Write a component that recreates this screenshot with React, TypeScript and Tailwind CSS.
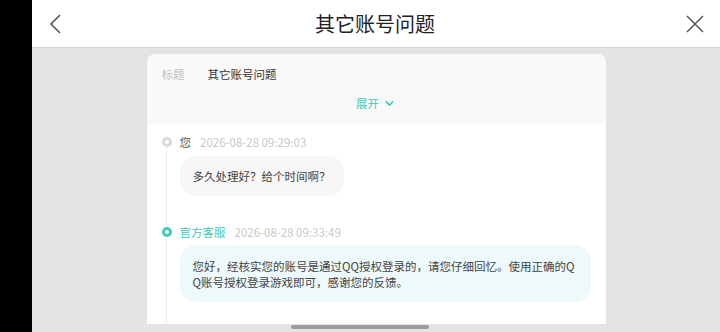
import { ChevronDown } from "lucide-react";

const font = { fontFamily: '"Noto Sans CJK SC", "Noto Sans", sans-serif' };

function Dot({ active }: { active?: boolean }) {
  return (
    <span
      className={`flex h-[10px] w-[10px] shrink-0 items-center justify-center rounded-full ${
        active ? "bg-[#45c9b9]" : "bg-[#d9d9d9]"
      }`}
    >
      <span className="h-[4px] w-[4px] rounded-full bg-white" />
    </span>
  );
}

function Message({
  who,
  time,
  active,
  last,
  children,
}: {
  who: string;
  time: string;
  active?: boolean;
  last?: boolean;
  children: React.ReactNode;
}) {
  return (
    <div className="flex gap-[8px]">
      <div className="flex w-[10px] flex-col items-center pt-[3px]">
        <Dot active={active} />
        <div className="w-px flex-1 bg-[#ededed]" />
      </div>
      <div className={`flex min-w-0 flex-1 flex-col ${last ? "pb-[22px]" : "pb-[28px]"}`}>
        <div className="flex h-[16px] items-center gap-[9px] text-[11.5px] leading-[16px]">
          <span className={active ? "text-[#45c9b9]" : "text-[#555]"}>{who}</span>
          <span className="text-[#c9c9c9]">{time}</span>
        </div>
        {children}
      </div>
    </div>
  );
}

export default function App() {
  return (
    <div className="relative flex h-[332px] w-[720px] overflow-hidden bg-black" style={font}>
      <div className="w-[32px] shrink-0 bg-black" />
      <div className="flex flex-1 flex-col bg-[#e4e4e4]">
        <header className="flex h-[48px] shrink-0 items-center justify-between border-b border-[#d3d3d3] bg-white px-[16px]">
          <svg width="16" height="20" viewBox="0 0 16 20" fill="none">
            <path d="M12 1 L3 10 L12 19" stroke="#555" strokeWidth="1.6" />
          </svg>
          <h1 className="text-[20px] leading-none text-[#222]">其它账号问题</h1>
          <svg width="18" height="18" viewBox="0 0 18 18" fill="none">
            <path d="M1 1 L17 17 M17 1 L1 17" stroke="#555" strokeWidth="1.5" />
          </svg>
        </header>

        <div className="mx-auto mt-[6px] flex h-[270px] w-[459px] flex-col overflow-hidden rounded-t-[8px] bg-white shadow-[0_0_2px_rgba(0,0,0,0.06)]">
          <div className="flex flex-col bg-[#f9f9f9] px-[15px] pt-[12px] pb-[13px]">
            <div className="flex h-[16px] items-center gap-[23px] text-[11.5px] leading-[16px]">
              <span className="text-[#c2c2c2]">标题</span>
              <span className="text-[#333]">其它账号问题</span>
            </div>
            <div className="mt-[13px] flex h-[16px] items-center justify-center gap-[4px] text-[11.5px] leading-[16px] text-[#45c9b9]">
              <span>展开</span>
              <ChevronDown size={13} strokeWidth={3} />
            </div>
          </div>

          <div className="flex flex-1 flex-col px-[15px] pt-[10px]">
            <Message who="您" time="2026-08-28 09:29:03">
              <div className="mt-[6px] w-fit rounded-[16px] bg-[#f6f6f6] px-[13px] py-[12px] text-[11.5px] leading-[16px] text-[#444]">
                多久处理好？给个时间啊？
              </div>
            </Message>
            <Message who="官方客服" time="2026-08-28 09:33:49" active last>
              <div className="mt-[5px] rounded-[16px] bg-[#eef9fb] px-[13px] pt-[13px] pb-[12px] text-[11.5px] leading-[16px] text-[#444]">
                您好，经核实您的账号是通过QQ授权登录的，请您仔细回忆。使用正确的Q
                <br />
                Q账号授权登录游戏即可，感谢您的反馈。
              </div>
            </Message>
          </div>
        </div>
      </div>
      <div className="absolute bottom-[3px] left-[291px] h-[4px] w-[138px] rounded-full bg-[#9c9c9c]" />
    </div>
  );
}
